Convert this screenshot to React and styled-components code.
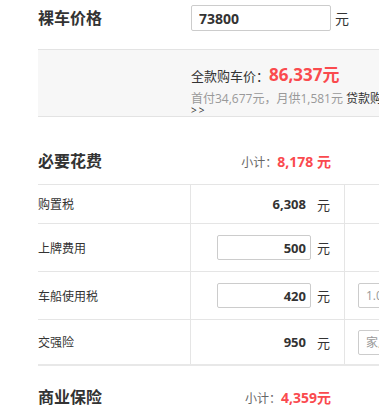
import React from "react";
import styled, { createGlobalStyle } from "styled-components";

const Global = createGlobalStyle`
  html, body {
    margin: 0;
    padding: 0;
    background: #fff;
    overflow: hidden;
  }
  body {
    font-family: "Open Sans", "Noto Sans CJK SC", sans-serif;
    color: #333;
  }
`;

const Page = styled.div`
  width: 640px;
  padding-left: 38px;
`;

const PriceRow = styled.div`
  display: flex;
  align-items: center;
  height: 36px;
`;

const Heading = styled.div`
  width: ${(p) => p.$width || "auto"};
  font-size: 16px;
  font-weight: 700;
  line-height: 24px;
  color: #333;
`;

const PriceInput = styled.input`
  box-sizing: border-box;
  width: 140px;
  height: 26px;
  border: 1px solid #ccc;
  border-radius: 2px;
  padding: 0 7px;
  font-family: inherit;
  font-size: 14px;
  font-weight: 700;
  color: #333;
  outline: none;
`;

const Yuan = styled.span`
  margin-left: 4px;
  font-size: 14px;
  color: #333;
`;

const Band = styled.div`
  box-sizing: border-box;
  margin-top: 13px;
  height: 68px;
  border-top: 1px solid #e3e3e3;
  border-bottom: 1px solid #e3e3e3;
  background: #f7f7f7;
  padding: 14px 0 0 153px;
  overflow: hidden;
`;

const Total = styled.div`
  font-size: 13px;
  line-height: 22px;
  color: #333;
`;

const Red = styled.span`
  color: #fa4a4e;
  font-weight: 700;
  font-size: ${(p) => p.$size || "14px"};
`;

const Note = styled.div`
  margin-top: 5px;
  font-size: 12px;
  line-height: 13px;
  color: #999;
  white-space: nowrap;
`;

const LoanLink = styled.span`
  color: #333;
`;

const Arrow = styled.span`
  display: block;
  color: #333;
  font-size: 10px;
  line-height: 11px;
  letter-spacing: 2px;
`;

const SectionHeader = styled.div`
  display: flex;
  justify-content: space-between;
  align-items: center;
  width: 293px;
  height: 24px;
  margin-top: ${(p) => p.$top};
  margin-bottom: 11px;
`;

const Subtotal = styled.div`
  font-size: 12px;
  color: #666;
`;

const Table = styled.div`
  border-bottom: 2px solid #e8e8e8;
`;

const Row = styled.div`
  box-sizing: border-box;
  display: grid;
  grid-template-columns: 153px 154px 300px;
  height: ${(p) => p.$h}px;
  border-top: 1px solid #e5e5e5;
`;

const NameCell = styled.div`
  display: flex;
  align-items: center;
  font-size: 12px;
  color: #333;
  border-right: 1px solid #e5e5e5;
`;

const ValueCell = styled.div`
  display: flex;
  align-items: center;
  justify-content: flex-end;
  padding-right: 14px;
  border-right: 1px solid #e5e5e5;
`;

const ExtraCell = styled.div`
  display: flex;
  align-items: center;
  padding-left: 13px;
`;

const Amount = styled.span`
  font-size: 13px;
  font-weight: 700;
  color: #333;
  padding-right: 5px;
`;

const AmountInput = styled.input`
  box-sizing: border-box;
  width: 94px;
  height: 25px;
  border: 1px solid #ccc;
  border-radius: 2px;
  padding: 0 4px 0 0;
  text-align: right;
  font-family: inherit;
  font-size: 13px;
  font-weight: 700;
  color: #333;
  outline: none;
`;

const Unit = styled.span`
  margin-left: 6px;
  font-size: 13px;
  color: #333;
`;

const Picker = styled.select`
  box-sizing: border-box;
  appearance: none;
  width: 150px;
  height: 25px;
  border: 1px solid #ccc;
  border-radius: 2px;
  padding: 0 0 0 7px;
  background: #fff;
  font-family: inherit;
  font-size: 12px;
  color: #999;
  outline: none;
`;

const rows = [
  { name: "购置税", value: "6,308", editable: false, h: 39 },
  { name: "上牌费用", value: "500", editable: true, h: 48 },
  { name: "车船使用税", value: "420", editable: true, h: 48, option: "1.0L(含)以下" },
  { name: "交强险", value: "950", editable: false, h: 45, option: "家用6座以下" },
];

export default function App() {
  return (
    <Page>
      <Global />
      <PriceRow>
        <Heading $width="153px">裸车价格</Heading>
        <PriceInput defaultValue="73800" />
        <Yuan>元</Yuan>
      </PriceRow>

      <Band>
        <Total>
          全款购车价：<Red $size="17px">86,337元</Red>
        </Total>
        <Note>
          首付34,677元，月供1,581元 <LoanLink>贷款购车<Arrow>&gt;&gt;</Arrow></LoanLink>
        </Note>
      </Band>

      <SectionHeader $top="32px">
        <Heading>必要花费</Heading>
        <Subtotal>
          小计：<Red>8,178 元</Red>
        </Subtotal>
      </SectionHeader>

      <Table>
        {rows.map((r) => (
          <Row key={r.name} $h={r.h}>
            <NameCell>{r.name}</NameCell>
            <ValueCell>
              {r.editable ? <AmountInput defaultValue={r.value} /> : <Amount>{r.value}</Amount>}
              <Unit>元</Unit>
            </ValueCell>
            <ExtraCell>
              {r.option && (
                <Picker defaultValue={r.option}>
                  <option>{r.option}</option>
                </Picker>
              )}
            </ExtraCell>
          </Row>
        ))}
      </Table>

      <SectionHeader $top="19px">
        <Heading>商业保险</Heading>
        <Subtotal>
          小计：<Red>4,359元</Red>
        </Subtotal>
      </SectionHeader>
    </Page>
  );
}
